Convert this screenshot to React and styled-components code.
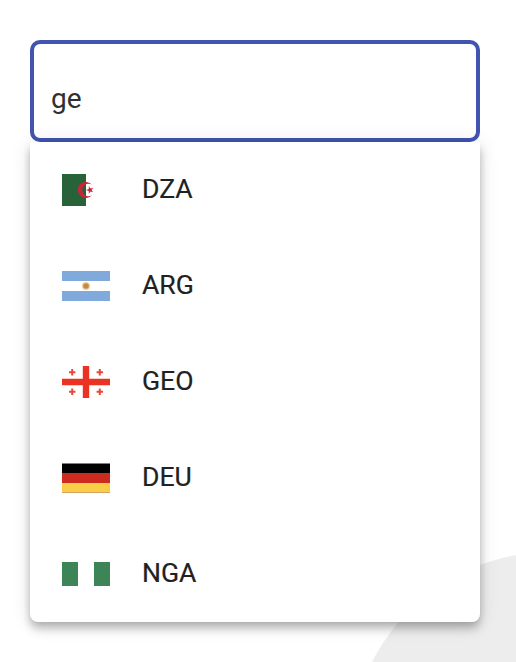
import React from "react";
import styled, { createGlobalStyle } from "styled-components";

const GlobalStyle = createGlobalStyle`
  * { box-sizing: border-box; }
  html, body { margin: 0; height: 100%; overflow: hidden; background: #fff; }
`;

const Page = styled.main`
  position: relative;
  height: 662px;
  overflow: hidden;
  padding: 40px 36px 0 30px;
  font-family: Roboto, sans-serif;
  background: #fff;
`;

const BackgroundCircle = styled.div`
  position: absolute;
  left: 350px;
  top: 551.5px;
  width: 403px;
  height: 403px;
  border-radius: 50%;
  background: #ededed;
`;

const Autocomplete = styled.div`
  position: relative;
  width: 450px;
`;

const Field = styled.input`
  display: block;
  width: 100%;
  height: 102px;
  padding: 15px 17px 0;
  border: 4px solid #4054b0;
  border-radius: 10px;
  outline: none;
  background: transparent;
  color: #303030;
  caret-color: transparent;
  font: 400 28px/32px Roboto, sans-serif;
`;

const Panel = styled.ul`
  position: relative;
  margin: 0;
  padding: 0;
  list-style: none;
  background: #fff;
  border-radius: 0 0 8px 8px;
  box-shadow:
    0 4px 8px -2px rgba(0, 0, 0, 0.2),
    0 8px 10px 0 rgba(0, 0, 0, 0.14),
    0 2px 20px 0 rgba(0, 0, 0, 0.12);
`;

const Option = styled.li`
  display: flex;
  align-items: center;
  gap: 32px;
  height: 96px;
  padding: 0 32px;
`;

const Flag = styled.svg`
  display: block;
  flex: none;
  width: 48px;
  height: 32px;
`;

const Code = styled.span`
  color: #212121;
  font-size: 26.6px;
  line-height: 32px;
  margin-top: -2px;
  -webkit-text-stroke: 0.2px #212121;
`;

const Algeria = () => (
  <Flag viewBox="0 0 48 32">
    <path fill="#286239" d="M0 0h24v32H0z" />
    <path fill="#cb2439" d="M30.2 11.1a8 8 0 1 0 0 9.8a6.2 6.2 0 1 1 0-9.8z" />
    <path fill="#cb2439" d="M24 16l2.8-.9v-2.9l1.8 2.3 2.6-.8-1.6 2.3 1.6 2.3-2.6-.8-1.8 2.3v-2.9z" />
  </Flag>
);

const Argentina = () => (
  <Flag viewBox="0 0 48 32">
    <path fill="#81aadc" d="M0 1h48v10H0zM0 21h48v10H0z" />
    <circle cx="24" cy="16" r="4.1" fill="#ead2ad" />
    <circle cx="24" cy="16" r="2.8" fill="#c58a3e" />
  </Flag>
);

const Georgia = () => (
  <Flag viewBox="0 0 48 32">
    <path fill="#eb3323" d="M20.8 0h6.4v12.8H48v6.4H27.2V32h-6.4V19.2H0v-6.4h20.8z" />
    {[[10.2, 6.3], [37.8, 6.3], [10.2, 25.7], [37.8, 25.7]].map(([x, y]) => (
      <path
        key={`${x}-${y}`}
        fill="#eb4738"
        d={`M${x - 1} ${y - 3.2}h2v2.2h2.2v2h-2.2v2.2h-2v-2.2h-2.2v-2h2.2z`}
      />
    ))}
  </Flag>
);

const Germany = () => (
  <Flag viewBox="0 0 48 32">
    <path d="M0 1.5h48v9.6H0z" />
    <path fill="#cc2b1d" d="M0 11h48v10H0z" />
    <path fill="#f8ce46" d="M0 21h48v9.4H0z" />
    <path fill="#d4a461" d="M0 30h48v.9H0z" />
  </Flag>
);

const Nigeria = () => (
  <Flag viewBox="0 0 48 32">
    <path fill="#3d8556" d="M0 4h16v24H0zM32 4h16v24H32z" />
  </Flag>
);

const countries = [
  { code: "DZA", FlagIcon: Algeria },
  { code: "ARG", FlagIcon: Argentina },
  { code: "GEO", FlagIcon: Georgia },
  { code: "DEU", FlagIcon: Germany },
  { code: "NGA", FlagIcon: Nigeria },
];

export default function App() {
  return (
    <>
      <GlobalStyle />
      <Page>
        <BackgroundCircle />
        <Autocomplete>
          <Field aria-label="Country" defaultValue="ge" />
          <Panel role="listbox">
            {countries.map(({ code, FlagIcon }) => (
              <Option key={code} role="option">
                <FlagIcon />
                <Code>{code}</Code>
              </Option>
            ))}
          </Panel>
        </Autocomplete>
      </Page>
    </>
  );
}
